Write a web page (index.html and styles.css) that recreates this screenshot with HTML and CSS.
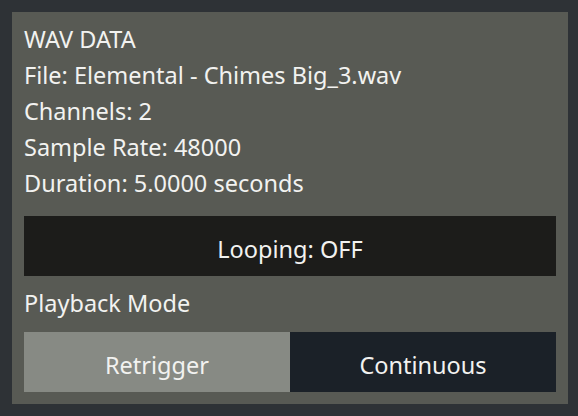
FILE: index.html
```html
<!DOCTYPE html>
<html lang="en">
<head>
    <meta charset="UTF-8">
    <meta name="viewport" content="width=device-width, initial-scale=1.0">
    <title>WAV Data</title>
    <link rel="stylesheet" href="styles.css">
</head>
<body>
    <div class="panel">
        <div class="info">
            <p>WAV DATA</p>
            <p>File: Elemental - Chimes Big_3.wav</p>
            <p>Channels: 2</p>
            <p>Sample Rate: 48000</p>
            <p>Duration: 5.0000 seconds</p>
        </div>
        <button class="loop">Looping: OFF</button>
        <p class="label">Playback Mode</p>
        <div class="modes">
            <button class="mode active">Retrigger</button>
            <button class="mode">Continuous</button>
        </div>
    </div>
</body>
</html>
```

FILE: styles.css
```css
html, body {
    margin: 0;
    height: 100%;
}
body {
    background-color: #2e3236;
    font-family: "Noto Sans", "Open Sans", sans-serif;
    color: #f2f2f0;
    font-size: 23.5px;
    padding: 12px 10px 12px 12px;
    box-sizing: border-box;
}
.panel {
    background-color: #585a54;
    height: 100%;
    box-sizing: border-box;
    padding: 9px 12px 12px;
    display: flex;
    flex-direction: column;
}
p {
    margin: 0;
    line-height: 36px;
}
.info {
    margin-bottom: 15px;
}
button {
    font-family: inherit;
    font-size: 23.5px;
    color: #f2f2f0;
    border: 0;
    height: 60px;
    padding: 5px 0 0;
    cursor: pointer;
}
.loop {
    width: 100%;
    background-color: #1c1c1a;
}
.label {
    padding: 9px 0 11px;
}
.modes {
    display: flex;
}
.mode {
    flex: 1;
    background-color: #1b2128;
}
.mode.active {
    background-color: #878a84;
}
```
